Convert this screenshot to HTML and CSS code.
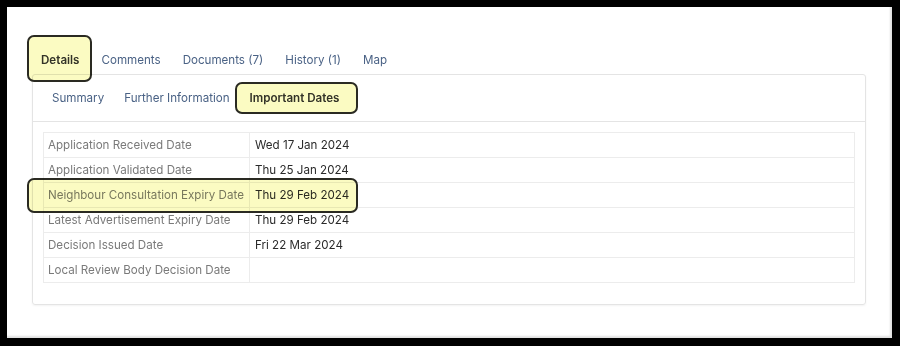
FILE: index.html
```html
<!DOCTYPE html>
<html lang="en">
<head>
<meta charset="utf-8">
<title>Important Dates</title>
<link rel="stylesheet" href="styles.css">
</head>
<body>
<div class="frame">
  <nav class="tabs">
    <span class="tab active">Details</span>
    <span class="tab">Comments</span>
    <span class="tab">Documents (7)</span>
    <span class="tab">History (1)</span>
    <span class="tab">Map</span>
  </nav>
  <section class="panel">
    <div class="subtabs">
      <span class="subtab">Summary</span>
      <span class="subtab">Further Information</span>
      <span class="subtab active">Important Dates</span>
    </div>
    <table class="dates">
      <tr><th>Application Received Date</th><td>Wed 17 Jan 2024</td></tr>
      <tr><th>Application Validated Date</th><td>Thu 25 Jan 2024</td></tr>
      <tr><th>Neighbour Consultation Expiry Date</th><td>Thu 29 Feb 2024</td></tr>
      <tr><th>Latest Advertisement Expiry Date</th><td>Thu 29 Feb 2024</td></tr>
      <tr><th>Decision Issued Date</th><td>Fri 22 Mar 2024</td></tr>
      <tr><th>Local Review Body Decision Date</th><td></td></tr>
    </table>
  </section>
  <div class="mark mark-details"></div>
  <div class="mark mark-dates"></div>
  <div class="mark mark-row"></div>
</div>
</body>
</html>
```
FILE: styles.css
```css
html, body {
  margin: 0;
  padding: 0;
  background: #000;
}
body {
  font-family: Inter, "Noto Sans", "Liberation Sans", sans-serif;
  font-size: 11.6px;
  line-height: 15px;
}
.frame {
  position: relative;
  margin: 7px 8px 8px 7px;
  width: 885px;
  height: 331px;
  background: #fff;
  box-shadow: inset -2px -2px 2px rgba(0, 0, 0, 0.12);
  box-sizing: border-box;
}
.tabs {
  display: flex;
  align-items: flex-end;
  height: 67px;
  padding-left: 23px;
  box-sizing: border-box;
}
.tab {
  padding: 0 11px 6px;
  color: #4a6285;
}
.tab.active {
  font-weight: 600;
  color: #333;
}
.panel {
  margin-left: 25px;
  width: 834px;
  height: 231px;
  border: 1px solid #e4e4e4;
  border-radius: 3px;
  box-shadow: 0 1px 2px rgba(0, 0, 0, 0.05);
  box-sizing: border-box;
}
.subtabs {
  display: flex;
  align-items: center;
  height: 46px;
  padding-left: 9px;
  border-bottom: 1px solid #e4e4e4;
}
.subtab {
  padding: 0 10px;
  color: #4a6285;
}
.subtab.active {
  font-weight: 600;
  color: #333;
}
.dates {
  border-collapse: collapse;
  margin: 10px 9px 0 10px;
  width: 812px;
  border: 1px solid #ececec;
  table-layout: fixed;
}
.dates th,
.dates td {
  height: 24px;
  padding: 0 2px 0 4px;
  border: 1px solid #ececec;
  text-align: left;
  font-weight: 400;
  white-space: nowrap;
  overflow: hidden;
}
.dates th {
  width: 199px;
  color: #7a7a7a;
}
.dates td {
  color: #2a2a2a;
  padding-left: 5px;
}
.mark {
  position: absolute;
  background: #fbfbc2;
  mix-blend-mode: multiply;
  border: 2px solid #2a2a22;
  border-radius: 7px;
  box-sizing: border-box;
}
.mark-details {
  left: 20px;
  top: 28px;
  width: 65px;
  height: 47px;
}
.mark-dates {
  left: 228px;
  top: 75px;
  width: 123px;
  height: 32px;
}
.mark-row {
  left: 20px;
  top: 171px;
  width: 331px;
  height: 35px;
}
```
